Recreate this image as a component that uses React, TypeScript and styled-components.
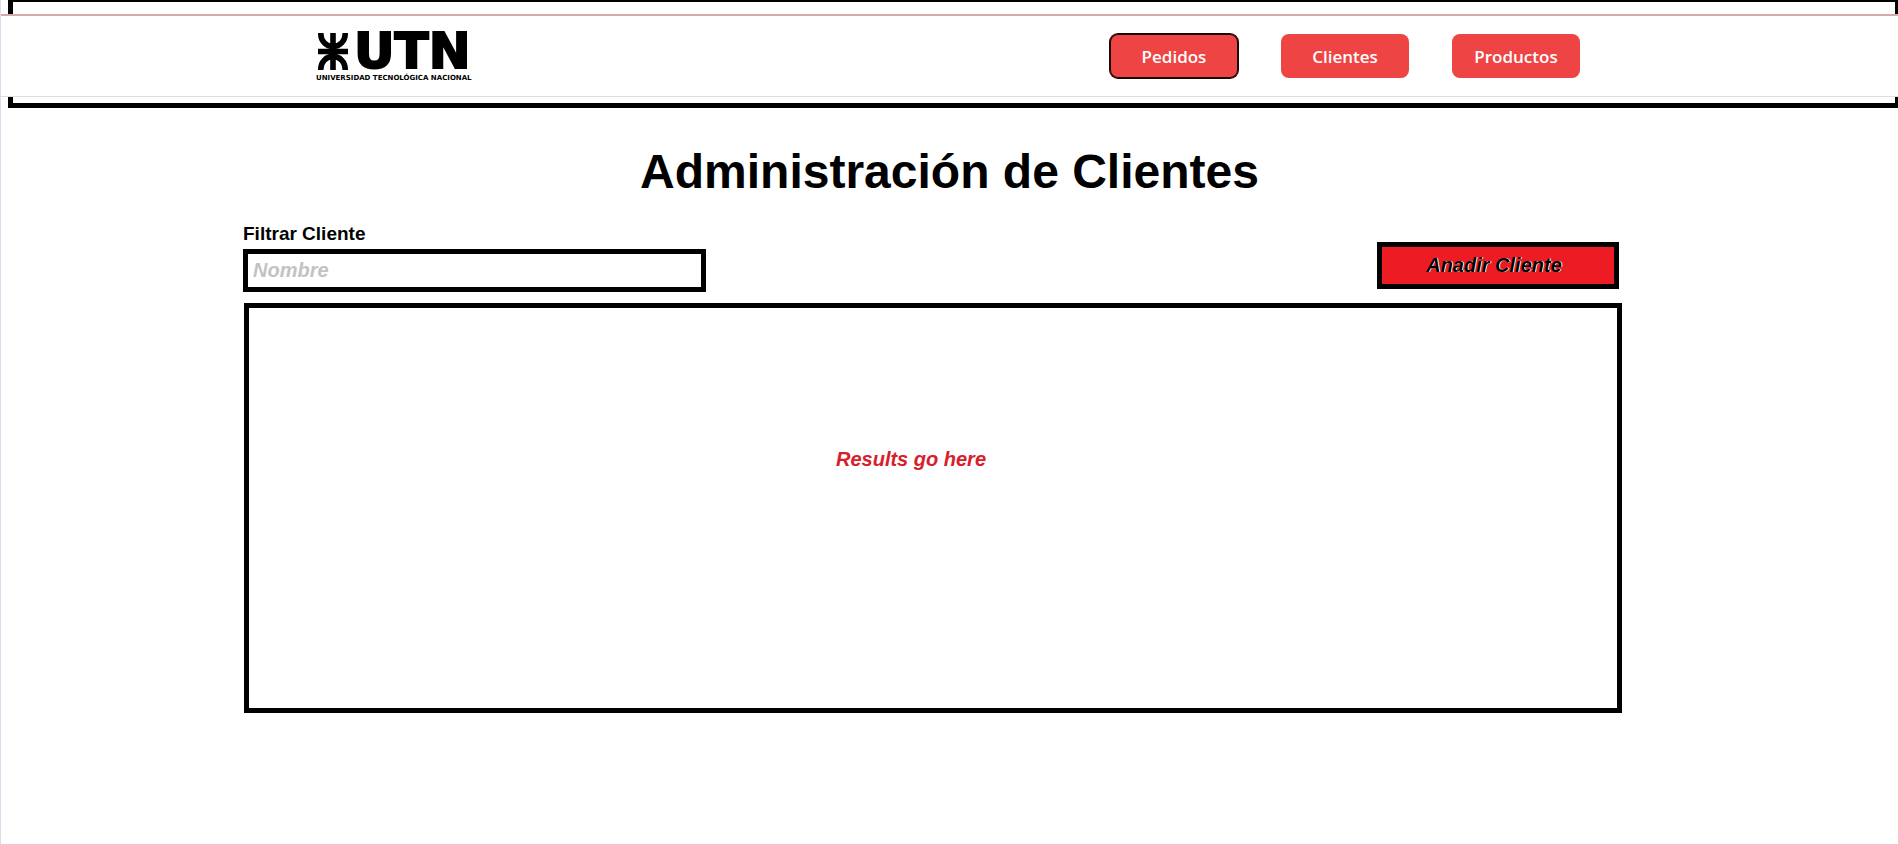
import React from 'react';
import styled, { createGlobalStyle } from 'styled-components';

const sans = `"Liberation Sans", Arial, sans-serif`;

const GlobalStyle = createGlobalStyle`
  *, *::before, *::after { box-sizing: border-box; }
  html, body { margin: 0; padding: 0; background: #fff; }
  body { font-family: ${sans}; color: #000; }
`;

const Page = styled.div`
  min-height: 100vh;
  border-left: 1px solid #dcdcee;
  overflow-x: hidden;
`;

const HeaderFrame = styled.header`
  margin-left: 7px;
  padding: 12px 0 6px;
  border: solid #000;
  border-width: 2px 3px 5px 5px;
`;

const NavBar = styled.div`
  margin: 0 -3px 0 -12px;
  padding: 0 318px 0 315px;
  height: 83px;
  display: flex;
  align-items: center;
  justify-content: space-between;
  background: #fff;
  border-top: 2px solid #d5aaaa;
  border-bottom: 1px solid #dedede;
`;

const Logo = styled.a`
  display: flex;
  flex-direction: column;
  gap: 4px;
  padding-top: 2px;
  color: #000;
  text-decoration: none;
`;

const LogoTop = styled.span`
  display: flex;
  align-items: center;
  gap: 6px;
  padding-left: 2px;
`;

const Emblem = styled.svg`
  display: block;
  width: 30px;
  height: 37px;
`;

const Acronym = styled.span`
  font: 700 50px/38px "DejaVu Sans", Verdana, sans-serif;
  -webkit-text-stroke: 2px #000;
`;

const FullName = styled.span`
  font: 700 7px/8px "DejaVu Sans", Verdana, sans-serif;
  white-space: nowrap;
`;

const NavLinks = styled.nav`
  display: flex;
  gap: 43px;
`;

const NavButton = styled.button<{ $focused?: boolean }>`
  width: 128px;
  height: 44px;
  padding: 2px 0 0;
  border: 0;
  border-radius: 8px;
  background: #ef4444;
  color: #fff;
  font: 600 17px/24px "Open Sans", "Noto Sans", sans-serif;
  cursor: pointer;
  box-shadow: ${({ $focused }) =>
    $focused ? '0 0 0 1px #1a0808, inset 0 0 0 1px #1a0808' : 'none'};
`;

const Main = styled.main`
  padding: 34px 276px 40px 242px;
`;

const Title = styled.h1`
  margin: 0 -276px 0 -242px;
  text-align: center;
  font-size: 48px;
  line-height: 60px;
  font-weight: 700;
`;

const Toolbar = styled.form`
  display: flex;
  align-items: flex-end;
  justify-content: space-between;
  margin-top: 17px;
  padding-right: 3px;
`;

const Field = styled.div`
  display: flex;
  flex-direction: column;
  flex: 0 1 463px;
`;

const FieldLabel = styled.label`
  font-size: 19px;
  line-height: 30px;
  font-weight: 700;
`;

const FieldInput = styled.input`
  width: 100%;
  height: 43px;
  padding: 0 5px;
  border: 5px solid #000;
  background: #fff;
  font: italic 700 20px/24px ${sans};
  &::placeholder { color: #c3c3c3; opacity: 1; }
`;

const AddButton = styled.button`
  width: 242px;
  height: 47px;
  margin-bottom: 3px;
  padding: 0 8px 2px 0;
  border: 5px solid #000;
  background: #ed1c24;
  color: #000;
  font: italic 700 20px/24px ${sans};
  text-shadow: 1px 0 0 #fff;
  cursor: pointer;
`;

const Results = styled.section`
  margin: 11px 0 0 1px;
  min-height: 410px;
  padding: 139px 44px 0 0;
  border: 5px solid #000;
  text-align: center;
`;

const ResultsNote = styled.p`
  margin: 0;
  color: #d8202a;
  font: italic 700 20px/24px ${sans};
`;

export default function App() {
  return (
    <>
      <GlobalStyle />
      <Page>
        <HeaderFrame>
          <NavBar>
            <Logo href="#">
              <LogoTop>
                <Emblem viewBox="0 0 30 37" aria-hidden="true">
                  <g fill="none" stroke="#000" strokeWidth="5.6">
                    <path d="M2.8 0 V1 A12.2 12.6 0 0 0 27.2 1 V0" />
                    <path d="M2.8 37 V36 A12.2 12.6 0 0 1 27.2 36 V37" />
                    <path d="M15 0V37M0 18.5H30" />
                  </g>
                </Emblem>
                <Acronym>UTN</Acronym>
              </LogoTop>
              <FullName>UNIVERSIDAD TECNOLÓGICA NACIONAL</FullName>
            </Logo>
            <NavLinks>
              <NavButton type="button" $focused>Pedidos</NavButton>
              <NavButton type="button">Clientes</NavButton>
              <NavButton type="button">Productos</NavButton>
            </NavLinks>
          </NavBar>
        </HeaderFrame>
        <Main>
          <Title>Administración de Clientes</Title>
          <Toolbar>
            <Field>
              <FieldLabel htmlFor="nombre">Filtrar Cliente</FieldLabel>
              <FieldInput id="nombre" type="text" placeholder="Nombre" />
            </Field>
            <AddButton type="button">Anadir Cliente</AddButton>
          </Toolbar>
          <Results>
            <ResultsNote>Results go here</ResultsNote>
          </Results>
        </Main>
      </Page>
    </>
  );
}
